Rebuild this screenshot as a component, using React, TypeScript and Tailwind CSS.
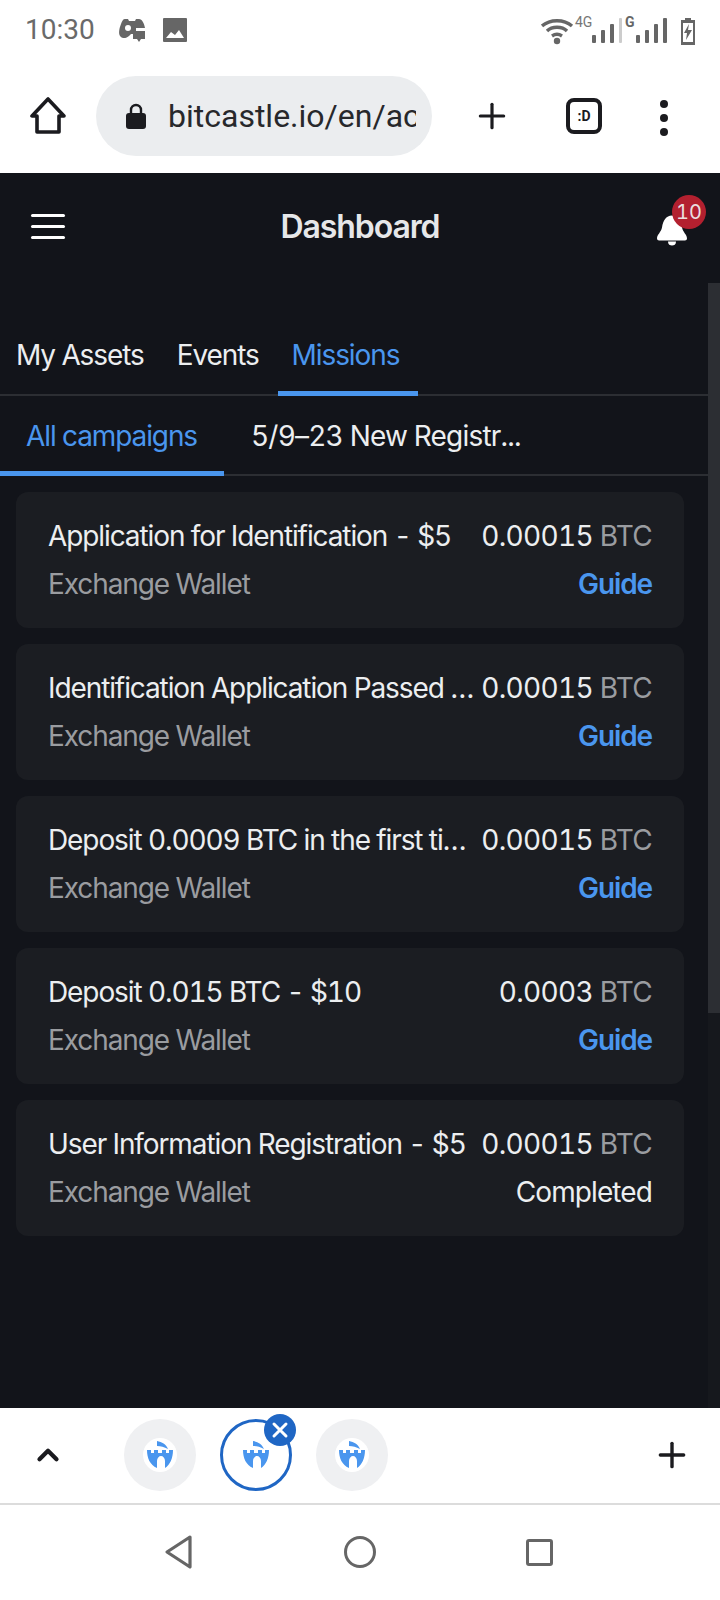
import * as React from "react";
import { ChevronUp, Plus } from "lucide-react";

const MISSIONS = [
  { title: "Application for Identification - $5", amount: "0.00015", done: false },
  { title: "Identification Application Passed - $5", amount: "0.00015", done: false },
  { title: "Deposit 0.0009 BTC in the first time - $5", amount: "0.00015", done: false },
  { title: "Deposit 0.015 BTC - $10", amount: "0.0003", done: false },
  { title: "User Information Registration - $5", amount: "0.00015", done: true },
];

function StatusBar() {
  return (
    <div className="flex h-[60px] items-center justify-between pl-[25px] pr-[24px] font-['Roboto',sans-serif]">
      <div className="flex items-center">
        <span className="text-[28px] leading-none text-[#6a6a6a]">10:30</span>
        <svg className="ml-[23px]" width="28" height="26" viewBox="0 0 28 26" fill="#666">
          <path d="M7 2h3l1 2h6l1-2h3c3 0 5 4 6 9h-9v6h-5l-2 2c-2 2-6 3-8 1-3-2-2-8 0-13 1-3 2-5 4-5z" />
          <circle cx="10" cy="11" r="3" fill="#fff" />
          <path d="M15 14h12v8h-4l-2 3-2-3h-4z" />
        </svg>
        <svg className="ml-[17px]" width="24" height="24" viewBox="0 0 24 24" fill="#666">
          <rect width="24" height="24" rx="1" />
          <path d="M3 20l5-6 4 3 4-5 5 8z" fill="#fff" />
        </svg>
      </div>
      <div className="flex items-end">
        <svg width="33" height="28" viewBox="0 0 33 28" fill="none">
          <path d="M1 9c8-7 22-7 30 0M6 14c5-5 15-5 20 0M11 19c3-2 7-2 10 0" stroke="#666" strokeWidth="3.4" />
          <circle cx="16" cy="24" r="3.2" fill="#666" />
        </svg>
        <div className="relative ml-[1px] h-[30px] w-[47px]">
          <span className="absolute left-0 top-0 text-[14px] leading-none text-[#777]">4G</span>
          <div className="absolute bottom-[2px] left-[17px] flex items-end gap-[5px]">
            <i className="h-[8px] w-[4px] rounded-[1px] bg-[#666]" />
            <i className="h-[13px] w-[4px] rounded-[1px] bg-[#666]" />
            <i className="h-[19px] w-[4px] rounded-[1px] bg-[#666]" />
            <i className="h-[25px] w-[3px] rounded-[1px] bg-[#ccc]" />
          </div>
        </div>
        <div className="relative ml-[1px] h-[30px] w-[40px]">
          <span className="absolute left-[2px] top-0 text-[14px] font-bold leading-none text-[#666]">G</span>
          <div className="absolute bottom-[2px] left-[13px] flex items-end gap-[5px]">
            <i className="h-[8px] w-[4px] rounded-[1px] bg-[#666]" />
            <i className="h-[13px] w-[4px] rounded-[1px] bg-[#666]" />
            <i className="h-[19px] w-[4px] rounded-[1px] bg-[#666]" />
            <i className="h-[25px] w-[4px] rounded-[1px] bg-[#666]" />
          </div>
        </div>
        <svg className="ml-[17px]" width="16" height="27" viewBox="0 0 16 27" fill="none">
          <path d="M5 0h6v2h4v25H1V2h4z" fill="#666" />
          <rect x="3" y="5" width="10" height="19" fill="#fff" />
          <path d="M9 6l-5 9h3l-1 7 6-10H8z" fill="#666" />
        </svg>
      </div>
    </div>
  );
}

function BrowserBar() {
  return (
    <div className="flex h-[113px] items-start pt-[16px]">
      <svg className="ml-[30px] mt-[20px] shrink-0" width="36" height="38" viewBox="0 0 36 38" fill="none">
        <path d="M18 3L2 20h5v16h22V20h5z" stroke="#1b1b1f" strokeWidth="3.6" strokeLinejoin="round" />
      </svg>
      <div className="ml-[30px] flex h-[80px] w-[336px] shrink-0 items-center rounded-full bg-[#ebedef] pl-[30px]">
        <svg className="shrink-0" width="20" height="26" viewBox="0 0 20 26" fill="none">
          <path d="M5 11V7a5 5 0 0110 0v4" stroke="#1b1b1f" strokeWidth="2.4" />
          <rect x="0" y="10" width="20" height="16" rx="3" fill="#1b1b1f" />
        </svg>
        <div className="ml-[22px] w-[248px] overflow-hidden whitespace-nowrap font-['Roboto',sans-serif] text-[32px] leading-[40px] text-[#27282b]">
          bitcastle.io/en/account
        </div>
      </div>
      <Plus className="ml-[40px] mt-[20px] shrink-0" size={40} strokeWidth={3.2} color="#1b1b1f" absoluteStrokeWidth />
      <div className="ml-[54px] mt-[22px] flex h-[36px] w-[36px] shrink-0 items-center justify-center rounded-[8px] border-[4px] border-[#1b1b1f] font-['Roboto',sans-serif] text-[14px] font-bold text-[#1b1b1f]">
        :D
      </div>
      <div className="ml-[58px] mt-[24px] flex shrink-0 flex-col gap-[6px]">
        <i className="h-[8px] w-[8px] rounded-full bg-[#1b1b1f]" />
        <i className="h-[8px] w-[8px] rounded-full bg-[#1b1b1f]" />
        <i className="h-[8px] w-[8px] rounded-full bg-[#1b1b1f]" />
      </div>
    </div>
  );
}

function MissionCard({ title, amount, done }: { title: string; amount: string; done: boolean }) {
  return (
    <div className="flex h-[136px] flex-col justify-center gap-[12px] rounded-[12px] bg-[#1b1d22] px-[32px]">
      <div className="flex items-center justify-between leading-[36px]">
        <span className="min-w-0 flex-1 truncate text-[#eceef0]">{title}</span>
        <span className="ml-[4px] shrink-0 tracking-[-0.7px] text-[#eceef0]">
          {amount} <span className="text-[#9a9ca0]">BTC</span>
        </span>
      </div>
      <div className="flex items-center justify-between leading-[36px]">
        <span className="text-[#9a9ca0]">Exchange Wallet</span>
        {done ? (
          <span className="tracking-[-0.9px] text-[#eceef0]">Completed</span>
        ) : (
          <span className="font-semibold text-[#4a96ee]">Guide</span>
        )}
      </div>
    </div>
  );
}

function Dashboard() {
  return (
    <div className="relative flex h-[1235px] flex-col bg-[#12141a] font-['Inter',sans-serif] text-[28px] tabular-nums tracking-[-1.1px] text-[#eceef0]">
      <div className="flex h-[107px] items-center justify-between pl-[31px] pr-[14px]">
        <div className="w-[39px]">
          <div className="flex w-[34px] flex-col gap-[8px]">
            <i className="h-[3px] rounded-full bg-white" />
            <i className="h-[3px] rounded-full bg-white" />
            <i className="h-[3px] rounded-full bg-white" />
          </div>
        </div>
        <span className="text-[32px] font-semibold text-[#e6e7e9]">Dashboard</span>
        <div className="relative h-[56px] w-[56px]">
          <svg className="absolute left-[6px] top-[15px]" width="32" height="33" viewBox="0 0 32 30" fill="#fff">
            <path d="M16 0c6 0 9 5 10 12 1 5 5 7 5 11 0 1-1 2-2 2H3c-1 0-2-1-2-2 0-4 4-6 5-11C7 5 10 0 16 0z" />
            <path d="M12 26h8c0 3-2 4-4 4s-4-1-4-4z" />
          </svg>
          <span className="absolute right-0 -top-[4px] flex h-[34px] w-[34px] items-center justify-center rounded-full bg-[#b3202f] text-[20px] tracking-normal text-[#eadfe0]">
            10
          </span>
        </div>
      </div>

      <div className="mt-[50px] flex h-[66px] items-start border-b-2 border-[#2c2e33] pr-[12px]">
        <span className="ml-[16px] pt-[4px]">My Assets</span>
        <span className="ml-[33px] pt-[4px]">Events</span>
        <span className="ml-[19px] h-[66px] w-[140px] border-b-[5px] border-[#4a96ee] pl-[14px] pt-[4px] text-[#4a96ee]">
          Missions
        </span>
      </div>

      <div className="flex h-[80px] items-start border-b-2 border-[#2c2e33]">
        <span className="h-[80px] w-[224px] border-b-[5px] border-[#4a96ee] pl-[26px] pt-[19px] text-[#4a96ee]">
          All campaigns
        </span>
        <span className="ml-[27px] pt-[19px] tracking-[-0.8px]">5/9–23 New Registr...</span>
      </div>

      <div className="mt-[16px] flex flex-col gap-[16px] pl-[16px] pr-[36px]">
        {MISSIONS.map((m) => (
          <MissionCard key={m.title} {...m} />
        ))}
      </div>

      <div className="absolute bottom-0 right-0 top-[110px] w-[12px] bg-[#16181d]">
        <div className="h-[730px] bg-[#2c2e33]" />
      </div>
    </div>
  );
}

function Favicon() {
  return (
    <svg width="26" height="28" viewBox="0 0 26 28">
      <path d="M10 0c5 1 9 3 11 8-4-2-7-3-11-3z" fill="#4a96ee" />
      <path d="M0 9h4v3h3V9h4v3h4V9h4v3h3V9h4c0 8-3 15-8 18v-7c0-3-2-5-4-5s-4 2-4 5v7C3 24 0 17 0 9z" fill="#4a96ee" />
    </svg>
  );
}

function TabCircle({ active }: { active?: boolean }) {
  return (
    <div
      className={
        active
          ? "relative flex h-[72px] w-[72px] items-center justify-center rounded-full border-[3px] border-[#1f66c4]"
          : "relative flex h-[72px] w-[72px] items-center justify-center rounded-full bg-[#eff0f2]"
      }
    >
      <div className="flex h-[34px] w-[34px] items-center justify-center rounded-full bg-white">
        <Favicon />
      </div>
      {active && (
        <span className="absolute -right-[7px] -top-[8px] flex h-[32px] w-[32px] items-center justify-center rounded-full bg-[#1f66c4]">
          <svg width="18" height="18" viewBox="0 0 18 18" stroke="#fff" strokeWidth="3" strokeLinecap="round">
            <path d="M3 3l12 12M15 3L3 15" />
          </svg>
        </span>
      )}
    </div>
  );
}

function TabStrip() {
  return (
    <div className="flex h-[97px] items-center border-b-2 border-[#dcdcdc] pb-[2px]">
      <ChevronUp className="ml-[31px]" size={34} strokeWidth={3} color="#1b1b1f" />
      <div className="ml-[59px] flex gap-[24px]">
        <TabCircle />
        <TabCircle active />
        <TabCircle />
      </div>
      <Plus className="ml-auto mr-[28px]" size={40} strokeWidth={3.4} color="#1b1b1f" absoluteStrokeWidth />
    </div>
  );
}

function NavBar() {
  return (
    <div className="flex h-[94px] items-center pl-[164px]">
      <svg width="28" height="36" viewBox="0 0 28 36" fill="none">
        <path d="M26 3L3 18l23 15z" stroke="#666" strokeWidth="3.2" strokeLinejoin="round" />
      </svg>
      <div className="ml-[152px] h-[32px] w-[32px] rounded-full border-[3px] border-[#666]" />
      <div className="ml-[150px] h-[27px] w-[27px] rounded-[3px] border-[3px] border-[#666]" />
    </div>
  );
}

export default function App() {
  return (
    <div className="h-[1600px] w-[720px] overflow-hidden bg-white">
      <StatusBar />
      <BrowserBar />
      <Dashboard />
      <TabStrip />
      <NavBar />
    </div>
  );
}
